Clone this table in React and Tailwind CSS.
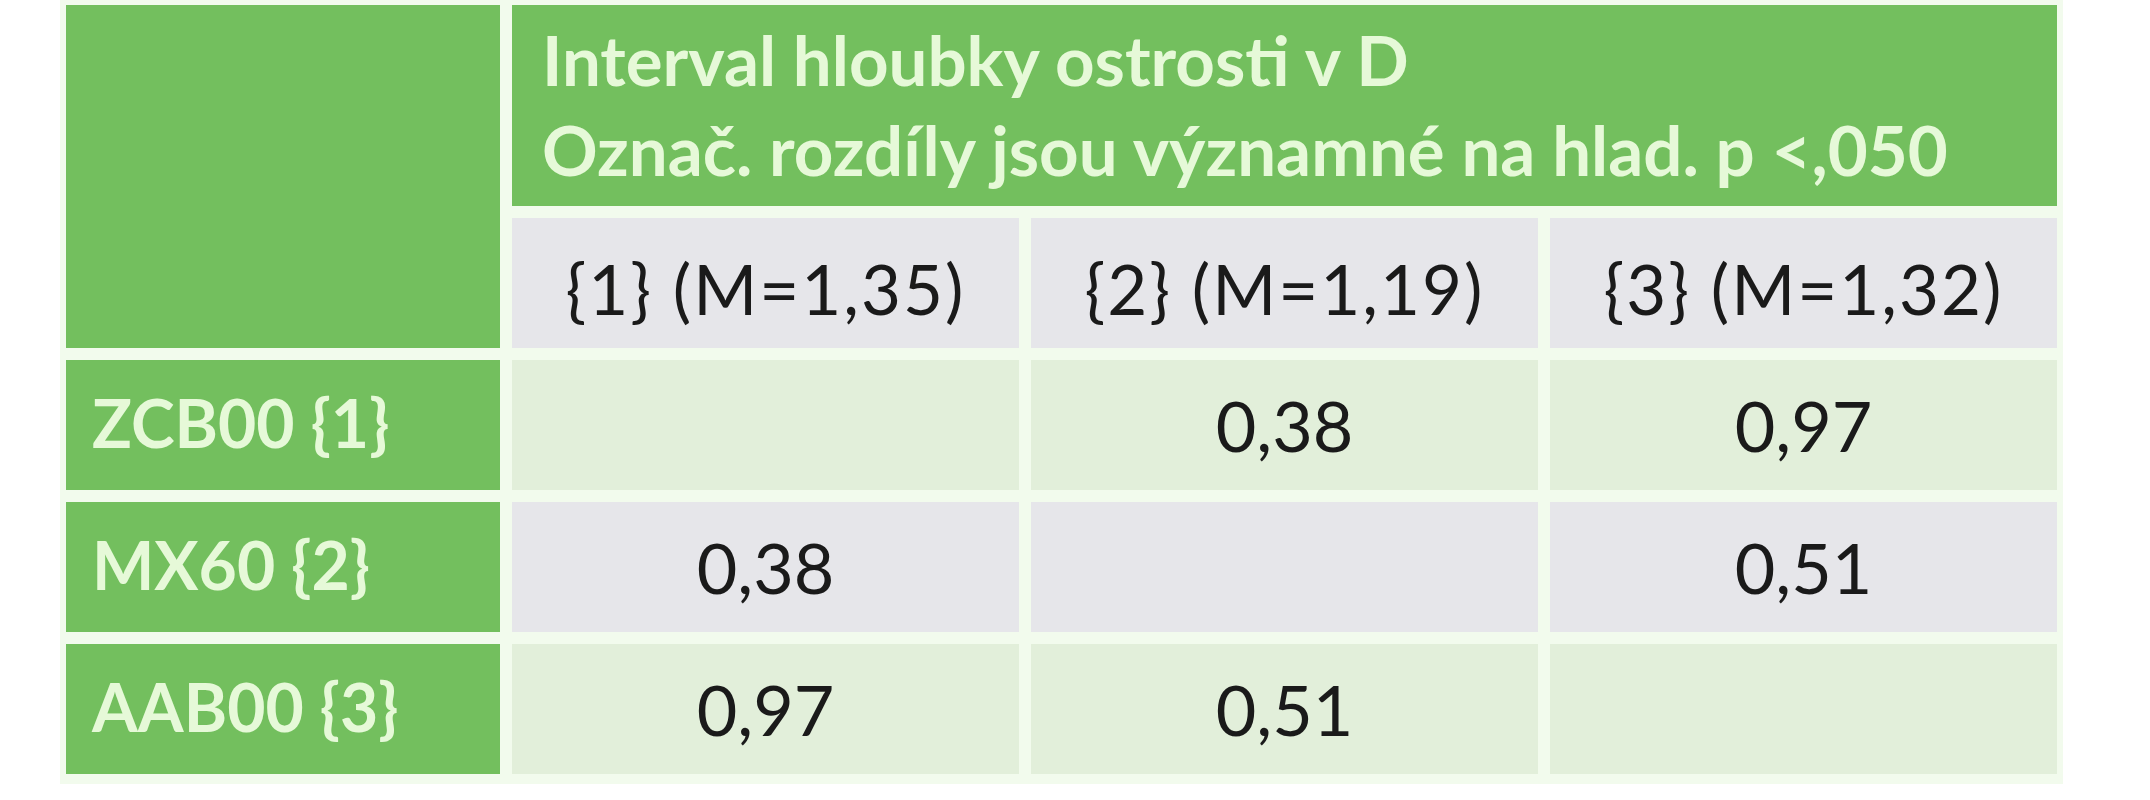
export default function App() {
  const cols = ["{1} (M=1,35)", "{2} (M=1,19)", "{3} (M=1,32)"];
  const rows = [
    { label: "ZCB00 {1}", values: ["", "0,38", "0,97"], bg: "bg-[#e2efda]" },
    { label: "MX60 {2}", values: ["0,38", "", "0,51"], bg: "bg-[#e6e6ea]" },
    { label: "AAB00 {3}", values: ["0,97", "0,51", ""], bg: "bg-[#e2efda]" },
  ];

  return (
    <div
      className="min-h-screen w-full bg-white"
      style={{ fontFamily: "Lato, 'Open Sans', sans-serif" }}
    >
      <div className="ml-[60px] inline-block bg-[#f2fbed] px-[6px] pt-[5px] pb-[10px]">
        <div className="grid grid-cols-[434px_507px_507px_507px] gap-x-[12px] gap-y-[12px]">
          <div className="row-span-2 bg-[#73bf5e]"></div>

          <div className="col-span-3 h-[201px] bg-[#73bf5e] pl-[30px] pt-[10px] text-[69px] font-bold leading-[90px] text-[#e6f9d8]">
            <div>Interval hloubky ostrosti v D</div>
            <div>Označ. rozdíly jsou významné na hlad. p &lt;,050</div>
          </div>

          {cols.map((c) => (
            <div
              key={c}
              className="h-[130px] bg-[#e6e6ea] pt-[36px] text-center text-[69px] leading-none tracking-[2px] text-[#1a1a1a]"
            >
              {c}
            </div>
          ))}

          {rows.map((r) => (
            <div key={r.label} className="contents">
              <div className="h-[130px] bg-[#73bf5e] pl-[26px] pt-[30px] text-[66px] font-bold leading-none text-[#e6f9d8]">
                {r.label}
              </div>
              {r.values.map((v, i) => (
                <div
                  key={i}
                  className={`h-[130px] ${r.bg} pt-[30px] text-center text-[70px] leading-none text-[#1a1a1a]`}
                >
                  {v}
                </div>
              ))}
            </div>
          ))}
        </div>
      </div>
    </div>
  );
}
